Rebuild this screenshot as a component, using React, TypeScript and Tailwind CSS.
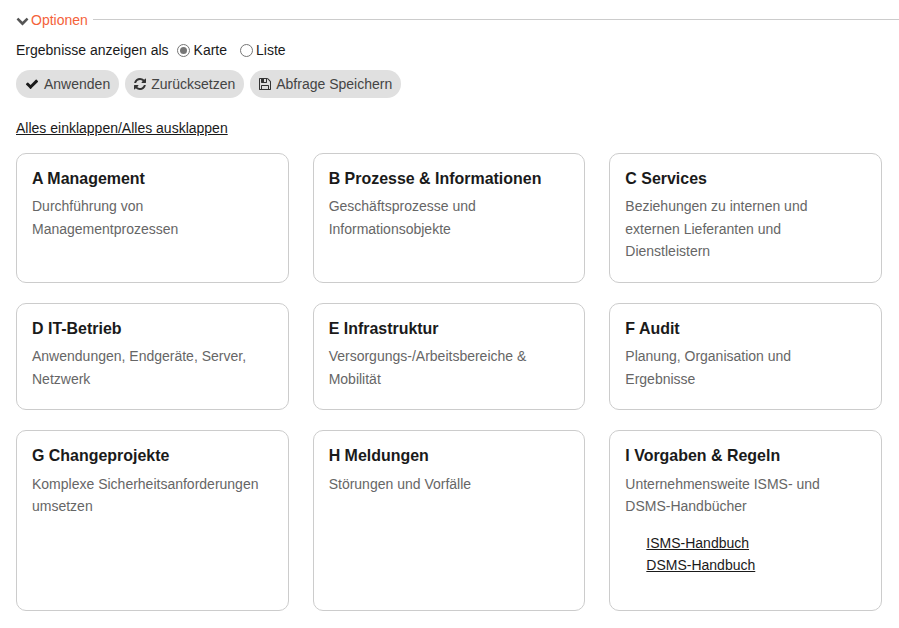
import React from 'react';

interface Category {
  title: string;
  text: string;
  links?: string[];
}

const rows: { height: string; cards: Category[] }[] = [
  {
    height: 'h-[130.1px]',
    cards: [
      { title: 'A Management', text: 'Durchführung von Managementprozessen' },
      { title: 'B Prozesse & Informationen', text: 'Geschäftsprozesse und Informationsobjekte' },
      { title: 'C Services', text: 'Beziehungen zu internen und externen Lieferanten und Dienstleistern' },
    ],
  },
  {
    height: 'h-[107.3px]',
    cards: [
      { title: 'D IT-Betrieb', text: 'Anwendungen, Endgeräte, Server, Netzwerk' },
      { title: 'E Infrastruktur', text: 'Versorgungs-/Arbeitsbereiche & Mobilität' },
      { title: 'F Audit', text: 'Planung, Organisation und Ergebnisse' },
    ],
  },
  {
    height: 'h-[181px]',
    cards: [
      { title: 'G Changeprojekte', text: 'Komplexe Sicherheitsanforderungen umsetzen' },
      { title: 'H Meldungen', text: 'Störungen und Vorfälle' },
      {
        title: 'I Vorgaben & Regeln',
        text: 'Unternehmensweite ISMS- und DSMS-Handbücher',
        links: ['ISMS-Handbuch', 'DSMS-Handbuch'],
      },
    ],
  },
];

// Older, heavier glyph shapes than the ones in the icon packages
const iconPaths = {
  chevron: 'M1683 808l-742 741q-19 19-45 19t-45-19l-742-741q-19-19-19-45.5t19-45.5l166-165q19-19 45-19t45 19l531 531 531-531q19-19 45-19t45 19l166 165q19 19 19 45.5t-19 45.5z',
  check: 'M1671 566q0 40-28 68l-724 724-136 136q-28 28-68 28t-68-28l-136-136-362-362q-28-28-28-68t28-68l136-136q28-28 68-28t68 28l294 295 656-657q28-28 68-28t68 28l136 136q28 28 28 68z',
  refresh: 'M1639 1056q0 5-1 7-64 268-268 434.5t-478 166.5q-146 0-282.5-55t-243.5-157l-129 129q-19 19-45 19t-45-19-19-45v-448q0-26 19-45t45-19h448q26 0 45 19t19 45-19 45l-137 137q71 66 161 102t187 36q134 0 250-65t186-179q11-17 53-117 8-23 30-23h192q13 0 22.5 9.5t9.5 22.5zm25-800v448q0 26-19 45t-45 19h-448q-26 0-45-19t-19-45 19-45l138-138q-148-137-349-137-134 0-250 65t-186 179q-11 17-53 117-8 23-30 23h-199q-13 0-22.5-9.5t-9.5-22.5v-7q65-268 270-434.5t480-166.5q146 0 284 55.5t245 156.5l130-129q19-19 45-19t45 19 19 45z',
  save: 'M512 1536h768v-384h-768v384zm896 0h128v-896q0-14-10-38.5t-20-34.5l-281-281q-10-10-34-20t-39-10v416q0 40-28 68t-68 28h-576q-40 0-68-28t-28-68v-416h-128v1280h128v-416q0-40 28-68t68-28h832q40 0 68 28t28 68v416zm-384-928v-320q0-13-9.5-22.5t-22.5-9.5h-192q-13 0-22.5 9.5t-9.5 22.5v320q0 13 9.5 22.5t22.5 9.5h192q13 0 22.5-9.5t9.5-22.5zm640 32v928q0 40-28 68t-68 28h-1344q-40 0-68-28t-28-68v-1344q0-40 28-68t68-28h928q40 0 88 20t76 48l280 280q28 28 48 76t20 88z',
};

const Icon: React.FC<{ name: keyof typeof iconPaths; className: string }> = ({ name, className }) => (
  <svg viewBox="0 0 1792 1792" fill="currentColor" className={className}>
    <path d={iconPaths[name]} />
  </svg>
);

const Card: React.FC<Category> = ({ title, text, links }) => (
  <div className="rounded-[10px] border border-[#cccccc] bg-white px-[15px] pt-[14px]">
    <h3 className="text-[15.96px] leading-[22px] font-bold text-[#1a1a1a]">{title}</h3>
    <p className="mt-[5.2px] pr-[10px] text-[14px] leading-[22.4px] text-[#666666]">{text}</p>
    {links && (
      <ul className="mt-[14.2px] pl-[21px] text-[14px] leading-[22.4px] text-[#1a1a1a]">
        {links.map(link => (
          <li key={link}>
            <a href="#" className="underline">{link}</a>
          </li>
        ))}
      </ul>
    )}
  </div>
);

const Pill: React.FC<{ icon: React.ReactNode; label: string; className: string }> = ({ icon, label, className }) => (
  <button className={`flex h-[28px] items-center rounded-full bg-[#e0e0e0] text-[14px] text-[#444444] ${className}`}>
    {icon}
    {label}
  </button>
);

export default function App() {
  return (
    <div className="h-[628px] overflow-hidden bg-white pl-4 font-['Liberation_Sans',Arial,sans-serif] text-[14px] text-[#1a1a1a]">
      <div className="flex h-[39px] items-center">
        <Icon name="chevron" className="mr-[2px] mt-[2px] h-[13px] w-[13px] text-[#555555]" />
        <span className="pt-[2px] text-[#f4623a]">Optionen</span>
        <div className="ml-[5px] h-px flex-1 bg-[#cccccc]" />
      </div>

      <div className="flex h-[22px] items-center">
        <span>Ergebnisse anzeigen als</span>
        <span className="ml-2 flex h-[13px] w-[13px] items-center justify-center rounded-full border border-[#767676]">
          <span className="h-[7px] w-[7px] rounded-full bg-[#767676]" />
        </span>
        <span className="ml-[4px]">Karte</span>
        <span className="ml-[13px] h-[13px] w-[13px] rounded-full border border-[#767676]" />
        <span className="ml-[3px]">Liste</span>
      </div>

      <div className="mt-[9px] flex gap-[6px]">
        <Pill icon={<Icon name="check" className="mr-[5px] h-[14px] w-[14px] text-[#1a1a1a]" />} label="Anwenden" className="pl-[9px] pr-[9px]" />
        <Pill icon={<Icon name="refresh" className="mr-[4px] h-[14px] w-[14px] text-[#333333]" />} label="Zurücksetzen" className="pl-[8px] pr-[9px]" />
        <Pill icon={<Icon name="save" className="mr-[4px] h-[14px] w-[14px] text-[#333333]" />} label="Abfrage Speichern" className="pl-[8px] pr-[9px]" />
      </div>

      <div className="mt-[19px] leading-[22px]">
        <a href="#" className="underline">Alles einklappen/Alles ausklappen</a>
      </div>

      <div className="mt-[14px] flex w-[866px] flex-col gap-[20px]">
        {rows.map(row => (
          <div key={row.cards[0].title} className={`grid grid-cols-3 gap-[24px] ${row.height}`}>
            {row.cards.map(card => (
              <Card key={card.title} {...card} />
            ))}
          </div>
        ))}
      </div>
    </div>
  );
}
